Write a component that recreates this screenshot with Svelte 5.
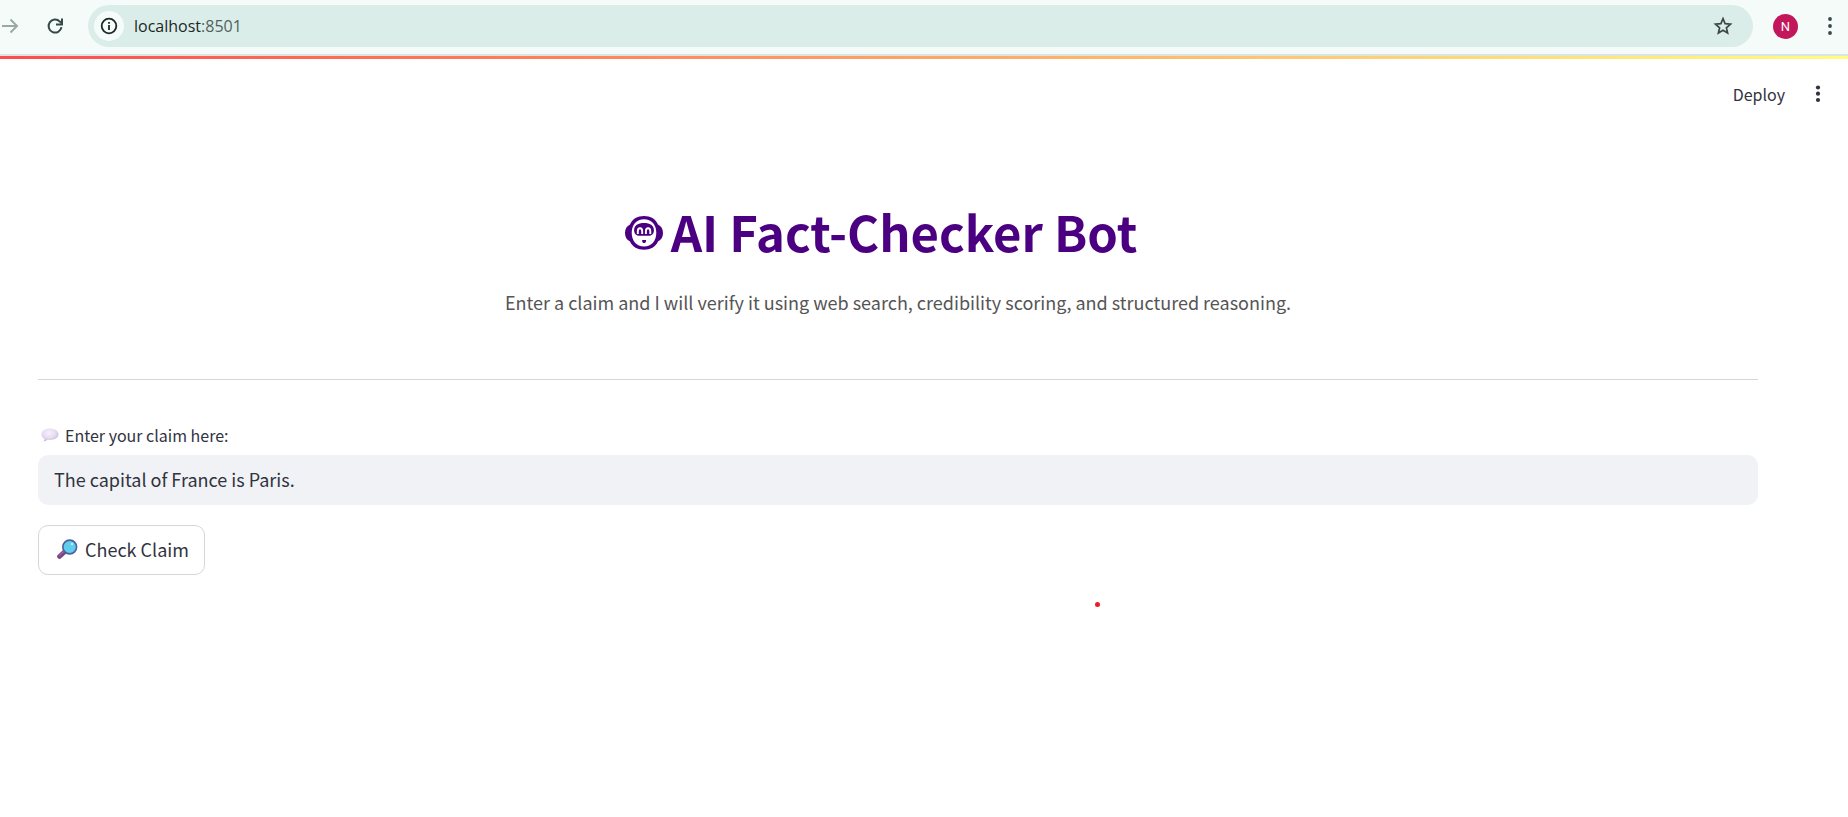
<script>
  let claim = $state('The capital of France is Paris.');
</script>

<div class="browser">
  <button class="plain forward" aria-label="Forward">
    <svg width="20" height="20" viewBox="0 0 20 20" fill="none" stroke="#9ca8a5" stroke-width="2"><path d="M2 10h15M10.500 3.500l6.500 6.500-6.500 6.500" /></svg>
  </button>
  <button class="plain reload" aria-label="Reload">
    <svg width="20" height="20" viewBox="0 0 20 20" fill="none" stroke="#35494a" stroke-width="2"><path d="M16.500 11.200A6.500 6.500 0 1 1 14.800 5.600L17 7.600" /><path d="M17 2.500v6h-6" /></svg>
  </button>
  <div class="address">
    <button class="plain info" aria-label="Site information">
      <svg width="18" height="18" viewBox="0 0 18 18" fill="none" stroke="#1c2726" stroke-width="1.800"><circle cx="9" cy="9" r="7.300" /><path d="M9 8v5M9 5v1.800" /></svg>
    </button>
    <span class="url">localhost<span class="port">:8501</span></span>
    <button class="plain" aria-label="Bookmark">
      <svg width="20" height="20" viewBox="0 0 20 20" fill="none" stroke="#3c4746" stroke-width="1.700"><path d="M10 2.700l2.100 5 5.400.500-4.100 3.600 1.200 5.300-4.600-2.800-4.600 2.800 1.200-5.300-4.100-3.600 5.400-.500z" /></svg>
    </button>
  </div>
  <button class="plain avatar" aria-label="Profile">N</button>
  <button class="plain" aria-label="Browser menu">
    <svg width="6" height="20" viewBox="0 0 6 20" fill="#35494a"><circle cx="3" cy="3" r="1.900" /><circle cx="3" cy="10" r="1.900" /><circle cx="3" cy="17" r="1.900" /></svg>
  </button>
</div>
<div class="decoration"></div>

<header>
  <button class="plain deploy">Deploy</button>
  <button class="plain" aria-label="App menu">
    <svg width="6" height="20" viewBox="0 0 6 20" fill="#31333f"><circle cx="3" cy="3.500" r="2.100" /><circle cx="3" cy="9.700" r="2.100" /><circle cx="3" cy="16" r="2.100" /></svg>
  </button>
</header>

<main>
  <h1>
    <svg class="robot" width="38" height="34" viewBox="0 0 38 34" aria-hidden="true">
      <path fill="#4b0082" d="M19 0C12.500 0 7.500 2.800 5 8.500 1.800 10 0 13 0 17s1.800 7 5 8.500C7.500 31 12.500 33.700 19 33.700S30.500 31 33 25.500c3.200-1.500 5-4.500 5-8.500s-1.800-7-5-8.500C30.500 2.800 25.500 0 19 0z" />
      <path fill="#fff" d="M19 3.200C11.500 3.200 6.700 8.600 6.700 16.800S11.500 30.500 19 30.500s12.300-5.500 12.300-13.700S26.500 3.200 19 3.200z" />
      <path fill="#4b0082" d="M19 7c-5.800 0-9.900 2.300-9.900 7.200 0 3.900 2.300 5.600 5.700 5.600h8.400c3.400 0 5.700-1.700 5.700-5.600C28.900 9.300 24.800 7 19 7z" />
      <path fill="none" stroke="#fff" stroke-width="1.900" d="M12.800 18v-2.500c0-4.300 4.400-4.300 4.400 0V18M20.900 18v-2.500c0-4.300 4.400-4.300 4.400 0V18" />
      <path fill="#4b0082" d="M17.200 24h3.800v1.200c0 1-.900 1.900-1.900 1.900s-1.900-.900-1.900-1.900z" />
    </svg>
    AI Fact-Checker Bot
  </h1>
  <p>Enter a claim and I will verify it using web search, credibility scoring, and structured reasoning.</p>
  <hr />
  <form onsubmit={(e) => e.preventDefault()}>
    <label for="claim">
      <svg width="18" height="14" viewBox="0 0 18 14" aria-hidden="true">
        <defs><radialGradient id="bubble" cx=".45" cy=".35" r=".65"><stop offset="0" stop-color="#f6f1fb" /><stop offset=".6" stop-color="#e6dcf1" /><stop offset="1" stop-color="#c5b4de" /></radialGradient></defs>
        <path fill="url(#bubble)" d="M8.800.500C4 .500.500 2.900.500 6.200c0 2 1.200 3.500 3 4.500.100 1-.400 1.900-1 2.700 1.800-.100 3.200-.700 4.200-1.600 6.500.700 10.800-2 10.800-5.600C17.500 2.900 13.600.500 8.800.500z" />
      </svg>
      Enter your claim here:
    </label>
    <input id="claim" type="text" bind:value={claim} />
    <button class="check" type="submit">
      <svg width="21" height="20" viewBox="0 0 21 20" aria-hidden="true">
        <path d="M2.500 17.500l6-5.500" stroke="#7b4480" stroke-width="4.600" stroke-linecap="round" />
        <path d="M2.300 16.600l5-4.600" stroke="#a463a4" stroke-width="1.200" stroke-linecap="round" />
        <circle cx="12.700" cy="8" r="6.900" fill="#5fcdeb" stroke="#4a609f" stroke-width="1.600" />
        <circle cx="15" cy="5" r="1.200" fill="#b9efff" />
      </svg>
      Check Claim
    </button>
  </form>
</main>
<span class="pointer"></span>

<style>
  :global(body) {
    margin: 0;
    background: #fff;
    color: #31333f;
    font-family: "Noto Sans CJK SC", sans-serif;
  }
  .plain {
    display: flex;
    align-items: center;
    justify-content: center;
    padding: 0;
    border: 0;
    background: none;
    color: inherit;
    font-family: inherit;
  }
  svg { flex: none; display: block; }
  .browser {
    display: flex;
    align-items: center;
    box-sizing: border-box;
    height: 56px;
    padding: 5px 15px 7px 0;
    background: #f5fbf9;
    border-bottom: 2px solid #dbe5e3;
  }
  .reload { margin: 0 23px 0 25px; }
  .address {
    flex: 1;
    display: flex;
    align-items: center;
    height: 42px;
    box-sizing: border-box;
    padding: 0 20px 0 6px;
    border-radius: 21px;
    background: #daede8;
  }
  .info {
    width: 30px;
    height: 30px;
    border-radius: 50%;
    background: #f5fbf9;
  }
  .url {
    flex: 1;
    margin-left: 10px;
    font: 16px/24px "Open Sans", sans-serif;
    color: #1c2726;
  }
  .port { color: #52615e; }
  .avatar {
    width: 25px;
    height: 25px;
    margin: 0 29px 0 20px;
    border-radius: 50%;
    background: #c2185b;
    color: #fff;
    font: 13px/25px Roboto, sans-serif;
  }
  .decoration {
    height: 3px;
    background: linear-gradient(90deg, #ff4b4b, #fffd80);
  }
  header {
    display: flex;
    align-items: center;
    justify-content: flex-end;
    gap: 30px;
    height: 70px;
    padding-right: 27px;
  }
  .deploy { font-size: 16px; line-height: 24px; }
  main {
    padding: 69px 90px 0 38px;
  }
  h1 {
    display: flex;
    align-items: center;
    justify-content: center;
    gap: 8px;
    margin: 0;
    padding-right: 34px;
    font-size: 49px;
    font-weight: 700;
    line-height: 66px;
    color: #4b0082;
  }
  .robot { margin-top: 4px; }
  p {
    margin: 22px 0 61px;
    text-align: center;
    font-size: 18px;
    line-height: 32px;
    color: #555;
  }
  hr {
    height: 1px;
    margin: 0 0 43px;
    border: 0;
    background: #d6d6d9;
  }
  form {
    display: flex;
    flex-direction: column;
    align-items: flex-start;
  }
  label {
    display: flex;
    align-items: center;
    gap: 6px;
    padding-left: 3px;
    margin-bottom: 8px;
    font-size: 16px;
    line-height: 24px;
  }
  input {
    width: 100%;
    height: 50px;
    box-sizing: border-box;
    padding: 0 16px 3px;
    border: 0;
    border-radius: 10px;
    background: #f0f2f6;
    color: #31333f;
    font-family: inherit;
    font-size: 18px;
  }
  .check {
    display: flex;
    align-items: center;
    gap: 7px;
    height: 50px;
    margin-top: 20px;
    padding: 0 15px 3px 18px;
    border: 1px solid #d6d6d9;
    border-radius: 10px;
    background: #fff;
    color: #31333f;
    font-family: inherit;
    font-size: 18px;
  }
  .pointer {
    position: absolute;
    left: 1095px;
    top: 602px;
    width: 5px;
    height: 5px;
    border-radius: 50%;
    background: #ed1c24;
  }
</style>
